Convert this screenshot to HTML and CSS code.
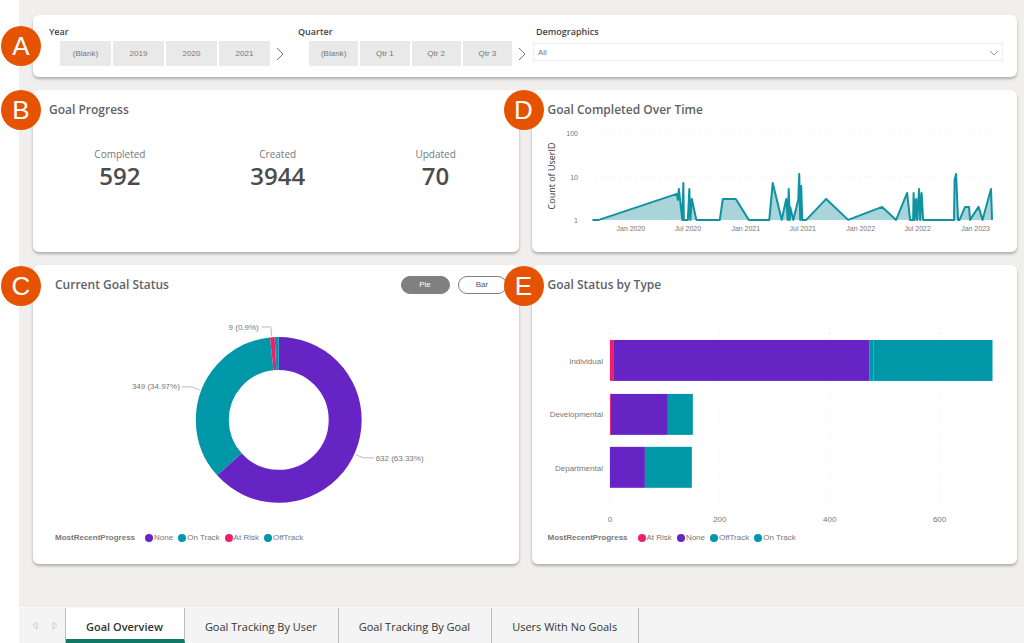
FILE: index.html
```html
<!DOCTYPE html>
<html lang="en">
<head>
  <meta charset="UTF-8" />
  <meta name="viewport" content="width=device-width, initial-scale=1.0"/>
  <title>Goal Overview</title>
  <link rel="stylesheet" href="styles.css">
</head>
<body>
  <main class="report">
    <section class="card filters">
      <span class="badge">A</span>
      <div class="slicer slicer-year">
        <h2 class="slicer-title">Year</h2>
        <div class="slicer-row">
          <button class="slicer-btn">(Blank)</button>
          <button class="slicer-btn">2019</button>
          <button class="slicer-btn">2020</button>
          <button class="slicer-btn">2021</button>
          <button class="slicer-next" aria-label="More years">
            <svg viewBox="0 0 8 14" width="8" height="14"><path d="M1 1l6 6-6 6"/></svg>
          </button>
        </div>
      </div>
      <div class="slicer slicer-quarter">
        <h2 class="slicer-title">Quarter</h2>
        <div class="slicer-row">
          <button class="slicer-btn">(Blank)</button>
          <button class="slicer-btn">Qtr 1</button>
          <button class="slicer-btn">Qtr 2</button>
          <button class="slicer-btn">Qtr 3</button>
          <button class="slicer-next" aria-label="More quarters">
            <svg viewBox="0 0 8 14" width="8" height="14"><path d="M1 1l6 6-6 6"/></svg>
          </button>
        </div>
      </div>
      <div class="slicer">
        <label class="slicer-title demo-title" for="demographics">Demographics</label>
        <div class="select-wrap">
          <select id="demographics"><option>All</option></select>
          <svg class="select-arrow" viewBox="0 0 8 5" width="8" height="5"><path d="M0 0l4 4 4-4"/></svg>
        </div>
      </div>
    </section>

    <div class="grid">
      <section class="card">
        <span class="badge">B</span>
        <header class="card-header"><h2>Goal Progress</h2></header>
        <dl class="metrics">
          <div><dt>Completed</dt><dd>592</dd></div>
          <div><dt>Created</dt><dd>3944</dd></div>
          <div><dt>Updated</dt><dd>70</dd></div>
        </dl>
      </section>

      <section class="card card-time">
        <span class="badge badge-right">D</span>
        <header class="card-header"><h2>Goal Completed Over Time</h2></header>
        <svg class="chart" viewBox="0 0 486 120">
          <g class="gridlines">
            <path d="M58 13H462M58 57H462"/>
          </g>
          <path class="area" d="M60.500 100 67 100 145 74 146 80 147 69 150.500 100 151.500 63 152 100 156 100 157.500 69 158.500 100 160 79 164.500 100 188 100 191 79 204 79 217 100 237.500 100 241 63 250 100 254.500 79 256 100 257 69 258 100 258.500 87 261.500 100 266.500 80 267.500 54 268.500 100 269.500 66 270.500 100 274.500 100 294.500 79 316.500 100 350.500 87 364.500 100 375.500 73 378.500 100 381.500 100 382 73 383 100 384.500 79 385.500 100 387.500 69 388.500 100 390 73 391.500 100 422.500 100 423 60 424.500 54 426.500 100 428 100 433.500 87 437.500 87 438.500 100 447 87 451 100 459.500 69 460.500 100"/>
          <g class="tick" text-anchor="end">
            <text x="46" y="16">100</text>
            <text x="46" y="60">10</text>
            <text x="46" y="103">1</text>
          </g>
          <g class="tick" text-anchor="middle">
            <text x="99" y="111">Jan 2020</text>
            <text x="156" y="111">Jul 2020</text>
            <text x="214" y="111">Jan 2021</text>
            <text x="271" y="111">Jul 2021</text>
            <text x="329" y="111">Jan 2022</text>
            <text x="386" y="111">Jul 2022</text>
            <text x="444" y="111">Jan 2023</text>
          </g>
          <text class="axis-title" transform="translate(23 56) rotate(-90)" text-anchor="middle">Count of UserID</text>
        </svg>
      </section>

      <section class="card card-status">
        <span class="badge badge-low">C</span>
        <header class="card-header">
          <h2>Current Goal Status</h2>
          <div class="toggle">
            <button class="pill pill-active">Pie</button>
            <button class="pill">Bar</button>
          </div>
        </header>
        <svg class="chart" viewBox="0 0 486 218">
          <!-- 998 goals in total, one unit of path length per goal -->
          <g class="donut" transform="rotate(-90 246 110)">
            <circle class="none" cx="246" cy="110" r="66.500" pathLength="998" stroke-dasharray="632 998"/>
            <circle class="on-track" cx="246" cy="110" r="66.500" pathLength="998" stroke-dasharray="349 998" stroke-dashoffset="-632"/>
            <circle class="at-risk" cx="246" cy="110" r="66.500" pathLength="998" stroke-dasharray="9 998" stroke-dashoffset="-981"/>
            <circle class="off-track" cx="246" cy="110" r="66.500" pathLength="998" stroke-dasharray="8 998" stroke-dashoffset="-990"/>
          </g>
          <path class="leader" d="M229 17h9l1 9M149 77h10l8 3M323 145l8 3h10"/>
          <g class="tick">
            <text x="226" y="20" text-anchor="end">9 (0.9%)</text>
            <text x="147" y="79" text-anchor="end">349 (34.97%)</text>
            <text x="343" y="151">632 (63.33%)</text>
          </g>
        </svg>
        <ul class="legend">
          <li class="legend-title">MostRecentProgress</li>
          <li><i class="dot none"></i>None</li>
          <li><i class="dot on-track"></i>On Track</li>
          <li><i class="dot at-risk"></i>At Risk</li>
          <li><i class="dot off-track"></i>OffTrack</li>
        </ul>
      </section>

      <section class="card">
        <span class="badge badge-right badge-low">E</span>
        <header class="card-header"><h2>Goal Status by Type</h2></header>
        <svg class="chart" viewBox="0 0 486 218">
          <g class="gridlines">
            <path d="M78 8V200M188 8V200M298 8V200M408 8V200"/>
          </g>
          <g class="bars">
            <rect class="at-risk" x="78" y="30" width="4" height="41"/>
            <rect class="none" x="82" y="30" width="256" height="41"/>
            <rect class="off-track" x="338" y="30" width="4" height="41"/>
            <rect class="on-track" x="342" y="30" width="119" height="41"/>
            <rect class="at-risk" x="78" y="84" width="1" height="41"/>
            <rect class="none" x="79" y="84" width="57" height="41"/>
            <rect class="on-track" x="136" y="84" width="25" height="41"/>
            <rect class="none" x="78" y="137" width="35" height="41"/>
            <rect class="on-track" x="113" y="137" width="47" height="41"/>
          </g>
          <g class="tick" text-anchor="end">
            <text x="71" y="54">Individual</text>
            <text x="71" y="107">Developmental</text>
            <text x="71" y="161">Departmental</text>
          </g>
          <g class="tick" text-anchor="middle">
            <text x="78" y="212">0</text>
            <text x="188" y="212">200</text>
            <text x="298" y="212">400</text>
            <text x="408" y="212">600</text>
          </g>
        </svg>
        <ul class="legend">
          <li class="legend-title">MostRecentProgress</li>
          <li><i class="dot at-risk"></i>At Risk</li>
          <li><i class="dot none"></i>None</li>
          <li><i class="dot off-track"></i>OffTrack</li>
          <li><i class="dot on-track"></i>On Track</li>
        </ul>
      </section>
    </div>
  </main>

  <nav class="tabs">
    <div class="tab-arrows">
      <button aria-label="Previous page"><svg viewBox="0 0 6 9" width="6" height="9"><path d="M5 1v7L1 4.500z"/></svg></button>
      <button aria-label="Next page"><svg viewBox="0 0 6 9" width="6" height="9"><path d="M1 1v7l4-3.500z"/></svg></button>
    </div>
    <a class="tab tab-active" href="#overview">Goal Overview</a>
    <a class="tab" href="#by-user">Goal Tracking By User</a>
    <a class="tab" href="#by-goal">Goal Tracking By Goal</a>
    <a class="tab" href="#no-goals">Users With No Goals</a>
  </nav>
</body>
</html>
```
FILE: styles.css
```css
* {
  box-sizing: border-box;
}

body {
  display: flex;
  flex-direction: column;
  min-height: 100vh;
  margin: 0;
  padding-left: 19px;
  background: #fff;
  color: #666;
  font-family: "Segoe UI", "Open Sans", sans-serif;
}

h2, dl, dd, ul {
  margin: 0;
  padding: 0;
}

button, select {
  font-family: "Liberation Sans", Arial, sans-serif;
  font-size: 8px;
  color: #777;
}

button {
  padding: 0;
  border: none;
  background: none;
  cursor: pointer;
}

.report {
  flex: 1;
  padding: 15px 7px 24px 14px;
  background: #f0efed;
}

.card {
  position: relative;
  background: #fff;
  border-radius: 6px;
  box-shadow: 0 2px 3px rgba(0, 0, 0, 0.28);
}

.badge {
  position: absolute;
  top: 0;
  left: -32px;
  z-index: 1;
  width: 40px;
  height: 40px;
  border-radius: 50%;
  background: #e65300;
  color: #fff;
  font: 26px/40px "Liberation Sans", Arial, sans-serif;
  text-align: center;
}

.badge-right {
  left: -28px;
}

.badge-low {
  top: 1px;
}

/* Filters */
.filters {
  display: grid;
  grid-template-columns: 249fr 235fr 470fr;
  height: 62px;
  padding: 10px 14px 0 16px;
  margin-bottom: 13px;
}

.filters .badge {
  top: 11px;
}

.slicer-title {
  display: block;
  font-size: 9px;
  line-height: 14px;
  font-weight: 600;
  color: #444;
}

.demo-title {
  padding-left: 3px;
}

.slicer-row {
  display: flex;
  gap: 2px;
  margin-top: 2px;
  padding-left: 11px;
}

.slicer-year {
  padding-right: 13px;
}

.slicer-quarter {
  padding-right: 6px;
}

.slicer-btn {
  flex: 1;
  height: 25px;
  background: #e9e9e9;
}

.slicer-next {
  width: 13px;
  padding-left: 4px;
}

.slicer-next svg,
.tab-arrows svg {
  display: block;
}

.slicer-next path,
.select-arrow path {
  fill: none;
  stroke: #777;
}

.select-arrow path {
  stroke: #999;
}

.select-wrap {
  position: relative;
  margin-top: 4px;
}

select {
  display: block;
  width: 100%;
  height: 18px;
  padding: 0 4px;
  border: 1px solid #eee;
  border-radius: 0;
  background: #fff;
  appearance: none;
}

.select-arrow {
  position: absolute;
  top: 8px;
  right: 5px;
  pointer-events: none;
}

/* Cards */
.grid {
  display: grid;
  grid-template-columns: 1fr 1fr;
  gap: 13px;
}

.card-header {
  display: flex;
  justify-content: space-between;
  align-items: center;
  height: 29px;
  padding: 11px 12px 0 16px;
}

.card-header h2 {
  font-size: 12px;
  line-height: 18px;
  font-weight: 600;
  color: #5f6266;
}

.card-status .card-header,
.card-status .legend {
  padding-left: 22px;
}

.card-time {
  padding-bottom: 12px;
}

.card-time .chart {
  margin-top: 1px;
}

.metrics {
  display: grid;
  grid-template-columns: repeat(3, 1fr);
  padding: 27px 4px 0 8px;
  text-align: center;
}

.metrics dt {
  font-size: 10px;
  line-height: 16px;
  font-weight: 500;
  color: #777;
}

.metrics dd {
  font-size: 24px;
  line-height: 28px;
  font-weight: 600;
  color: #4c4c4c;
}

.toggle {
  display: flex;
  gap: 8px;
}

.pill {
  width: 49px;
  height: 18px;
  border: 1px solid #808080;
  border-radius: 9px;
  color: #555;
}

.pill-active {
  background: #808080;
  color: #fff;
}

/* Charts */
.chart {
  display: block;
  width: 100%;
  margin-top: 16px;
}

.tick {
  font-family: "Liberation Sans", Arial, sans-serif;
  font-size: 8px;
  fill: #777;
}

.card-time .tick {
  font-size: 7px;
}

.axis-title {
  font-size: 9px;
  fill: #333;
}

.gridlines path {
  stroke: #e6e6e6;
  stroke-dasharray: 1 4;
}

.area {
  fill: #a9d5da;
  stroke: #0f93a0;
  stroke-width: 2;
  stroke-linejoin: round;
}

.leader {
  fill: none;
  stroke: #bbb;
}

.donut circle {
  fill: none;
  stroke-width: 33;
}

.donut .none { stroke: #6624c4; }
.donut .on-track,
.donut .off-track { stroke: #0097a9; }
.donut .at-risk { stroke: #f01f6b; }

.bars .none { fill: #6624c4; }
.bars .on-track,
.bars .off-track { fill: #0097a9; }
.bars .at-risk { fill: #f01f6b; }

.legend {
  display: flex;
  gap: 5px;
  height: 36px;
  padding-left: 16px;
  list-style: none;
  font: 8px/20px "Liberation Sans", Arial, sans-serif;
  color: #777;
}

.legend li {
  display: flex;
  align-items: center;
  height: 20px;
}

.legend .legend-title {
  margin-right: 5px;
  font-weight: bold;
}

.dot {
  width: 8px;
  height: 8px;
  margin-right: 1px;
  border-radius: 50%;
}

.dot.none { background: #6624c4; }
.dot.on-track,
.dot.off-track { background: #0097a9; }
.dot.at-risk { background: #f01f6b; }

/* Page tabs */
.tabs {
  display: flex;
  height: 36px;
  padding-left: 8px;
  border-top: 1px solid #fafafa;
  background: #f4f4f4;
}

.tab-arrows {
  display: flex;
  align-items: center;
  gap: 14px;
  width: 39px;
  padding-left: 5px;
  border-right: 1px solid #bbb;
}

.tab-arrows path {
  fill: none;
  stroke: #ccc;
}

.tab {
  padding: 0 21px 0 20px;
  border-right: 1px solid #bbb;
  color: #333;
  font-size: 11px;
  line-height: 38px;
  text-decoration: none;
}

.tab-active {
  border-bottom: 4px solid #117865;
  background: #fff;
  font-weight: 600;
}
```
